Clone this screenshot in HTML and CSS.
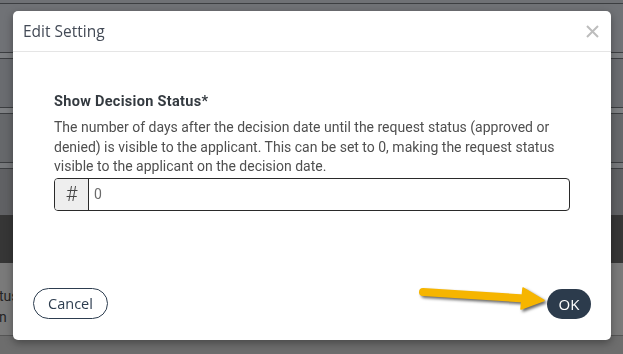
FILE: index.html
```html
<!DOCTYPE html>
<html>
<head>
<meta charset="utf-8">
<link rel="stylesheet" href="styles.css">
</head>
<body>
<div class="page">
  <div class="bg-row r0"></div>
  <div class="bg-row r1"></div>
  <div class="bg-row r2"></div>
  <div class="bg-row r3"></div>
  <div class="bg-row r4"></div>
  <div class="bg-row r5"></div>
  <div class="bg-row r6"></div>
  <div class="bg-row r7"></div>
  <div class="bg-row band"></div>
  <div class="bg-row lower"><div class="bg-text">tus</div><div class="bg-text">n</div></div>
  <div class="bg-row bottom"></div>
</div>

<div class="modal">
  <div class="modal-header">
    <div class="modal-title">Edit Setting</div>
    <svg class="close" width="13" height="13" viewBox="0 0 13 13"><path d="M1 1 L12 12 M12 1 L1 12" stroke="#bdbdbd" stroke-width="2" fill="none"/></svg>
  </div>
  <div class="modal-body">
    <div class="label">Show Decision Status*</div>
    <div class="desc">The number of days after the decision date until the request status (approved or denied) is visible to the applicant. This can be set to 0, making the request status visible to the applicant on the decision date.</div>
    <div class="input-group">
      <div class="addon">#</div>
      <div class="input">0</div>
    </div>
  </div>
  <div class="modal-footer">
    <button class="btn btn-cancel">Cancel</button>
    <button class="btn btn-ok">OK</button>
  </div>
</div>

<svg class="arrow" width="140" height="40" viewBox="410 280 140 40">
  <g class="arrow-g">
    <path d="M423 292 L524 298.5" stroke="#f6b500" stroke-width="8" stroke-linecap="round" fill="none"/>
    <path d="M523 288 L544 300.5 L521 309 Z" fill="#f6b500" stroke="#f6b500" stroke-width="1.5" stroke-linejoin="round"/>
  </g>
</svg>
</body>
</html>
```

FILE: styles.css
```css
* { box-sizing: border-box; }
html, body { margin: 0; padding: 0; }
body {
  width: 623px;
  height: 354px;
  overflow: hidden;
  background: #6c6d70;
  font-family: Roboto, "Liberation Sans", sans-serif;
}
.page { display: flex; flex-direction: column; }
.bg-row { border-bottom: 1px solid #3c3e41; flex: none; }
.r0 { height: 4px; background: #6f7175; }
.r1 { height: 49px; background: #707276; }
.r2 { height: 6px; background: #7c7e81; }
.r3 { height: 49px; background: #6a6c70; }
.r4 { height: 6px; background: #7e8083; }
.r5 { height: 49px; background: #66686b; }
.r6 { height: 6px; background: #76787b; }
.r7 { height: 46px; background: #606164; border-bottom: none; }
.band { height: 48px; background: #363636; border-bottom: none; }
.lower {
  height: 73px;
  background: #7a7a7a;
  border-bottom: 1px solid #555;
  padding-top: 23px;
  display: flex;
  flex-direction: column;
}
.bg-text {
  font-size: 14px;
  line-height: 21px;
  color: #242424;
  margin-left: -1px;
}
.bottom { height: 20px; background: #6d6d6d; border-bottom: none; }

.modal {
  position: fixed;
  left: 13px;
  top: 11px;
  width: 598px;
  height: 329px;
  background: #fff;
  border-radius: 5px;
  box-shadow: 0 3px 9px rgba(0,0,0,0.35);
  display: flex;
  flex-direction: column;
}
.modal-header {
  height: 41px;
  border-bottom: 1px solid #e5e5e5;
  display: flex;
  align-items: center;
  justify-content: space-between;
  padding: 0 12px 0 10px;
}
.modal-title {
  font-family: "Open Sans", Lato, sans-serif;
  font-size: 15.5px;
  color: #434a56;
}
.close { display: block; margin-top: 1px; }
.modal-body {
  padding: 40px 41px 0 41px;
}
.label {
  font-size: 14.5px;
  font-weight: 700;
  line-height: 20px;
  letter-spacing: 0.3px;
  color: #343a40;
  margin-bottom: 6px;
}
.desc {
  font-size: 14px;
  line-height: 19.5px;
  color: #4f4f4f;
  margin-bottom: 1px;
}
.input-group {
  display: flex;
  height: 33px;
  border: 1px solid #2a2a2a;
  border-radius: 4px;
  overflow: hidden;
}
.addon {
  width: 34px;
  background: #eeeeee;
  border-right: 1px solid #2a2a2a;
  display: flex;
  align-items: center;
  justify-content: center;
  font-size: 20px;
  font-weight: 300;
  color: #444;
}
.input {
  flex: 1;
  display: flex;
  align-items: center;
  padding-left: 5px;
  font-size: 14px;
  color: #6a6a6a;
}
.modal-footer {
  margin-top: auto;
  display: flex;
  justify-content: space-between;
  align-items: center;
  padding: 0 20px 21px 20px;
}
.btn {
  font-family: "Open Sans", Lato, sans-serif;
  font-size: 14.5px;
  border-radius: 16px;
  cursor: pointer;
  padding: 0;
}
.btn-cancel {
  width: 75px;
  height: 31px;
  background: #fff;
  border: 1px solid #2d3d4f;
  color: #2d3d4f;
}
.btn-ok {
  width: 44px;
  height: 30px;
  background: #2c3b4c;
  border: none;
  color: #fff;
  font-weight: 500;
  font-size: 15px;
}
.arrow {
  position: fixed;
  left: 410px;
  top: 280px;
}
.arrow-g { filter: drop-shadow(2px 2px 1.5px rgba(0,0,0,0.6)); }
```
